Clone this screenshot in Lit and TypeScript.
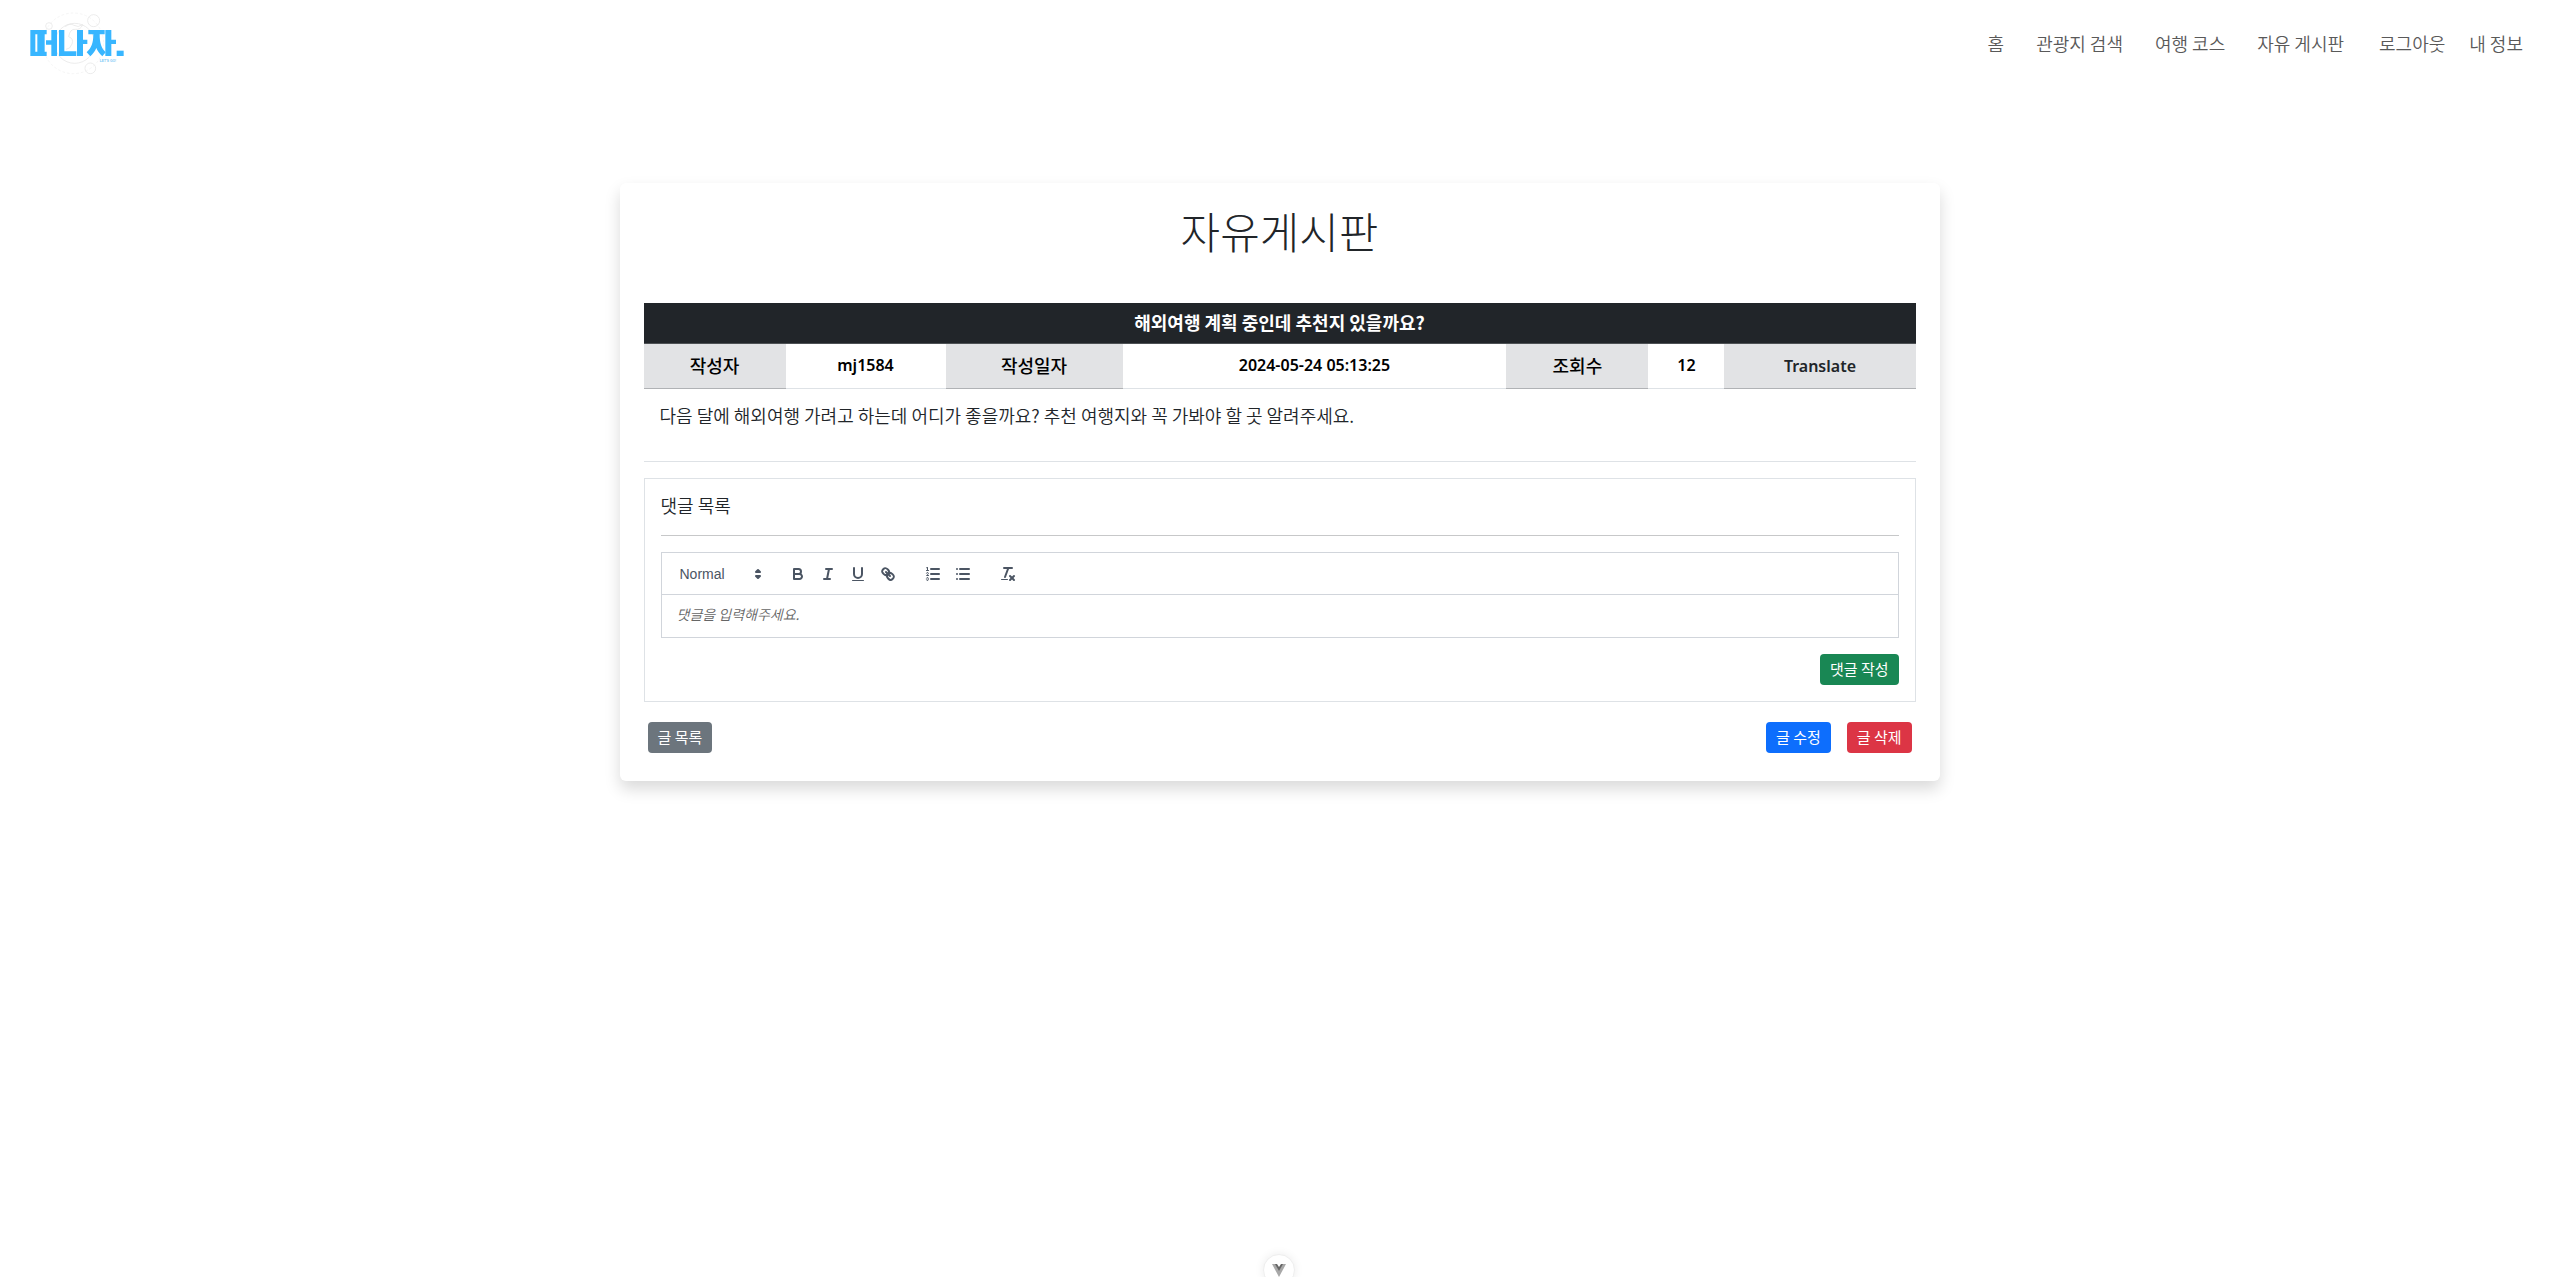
import { LitElement, html, css, svg } from "lit";
import { customElement, state } from "lit/decorators.js";

const icons = {
  bold: svg`<path class="s" d="M5,4H9.5A2.5,2.5,0,0,1,12,6.5v0A2.5,2.5,0,0,1,9.5,9H5A0,0,0,0,1,5,9V4A0,0,0,0,1,5,4Z"/><path class="s" d="M5,9h5.5A2.5,2.5,0,0,1,13,11.5v0A2.5,2.5,0,0,1,10.5,14H5a0,0,0,0,1,0,0V9A0,0,0,0,1,5,9Z"/>`,
  italic: svg`<line class="s" x1="7" x2="13" y1="4" y2="4"/><line class="s" x1="5" x2="11" y1="14" y2="14"/><line class="s" x1="8" x2="10" y1="14" y2="4"/>`,
  underline: svg`<path class="s" d="M5,3V9a4.012,4.012,0,0,0,4,4H9a4.012,4.012,0,0,0,4-4V3"/><rect class="f" height="1" rx="0.5" ry="0.5" width="12" x="3" y="15"/>`,
  link: svg`<line class="s" x1="7" x2="11" y1="7" y2="11"/><path class="s" d="M8.9,4.577a3.476,3.476,0,0,1,.36,4.679A3.476,3.476,0,0,1,4.577,8.9C3.185,7.5,2.035,6.4,4.217,4.217S7.5,3.185,8.9,4.577Z"/><path class="s" d="M13.423,9.1a3.476,3.476,0,0,0-4.679-.36,3.476,3.476,0,0,0,.36,4.679c1.392,1.392,2.5,2.542,4.679.36S14.815,10.5,13.423,9.1Z"/>`,
  ordered: svg`<line class="s" x1="7" x2="15" y1="4" y2="4"/><line class="s" x1="7" x2="15" y1="9" y2="9"/><line class="s" x1="7" x2="15" y1="14" y2="14"/><line class="s t" x1="2.5" x2="4.5" y1="5.5" y2="5.5"/><path class="f" d="M3.5,6A0.5,0.5,0,0,1,3,5.5V3.085l-0.276.138A0.5,0.5,0,0,1,2.053,3c-0.124-.247-0.023-0.324.224-0.447l1-.5A0.5,0.5,0,0,1,4,2.5v3A0.5,0.5,0,0,1,3.5,6Z"/><path class="s t" d="M4.5,10.5h-2c0-.234,1.85-1.076,1.85-2.234A0.959,0.959,0,0,0,2.5,8.156"/><path class="s t" d="M2.5,14.846a0.959,0.959,0,0,0,1.85-.109A0.7,0.7,0,0,0,3.75,14a0.688,0.688,0,0,0,.6-0.736,0.959,0.959,0,0,0-1.85-.109"/>`,
  bullet: svg`<line class="s" x1="6" x2="15" y1="4" y2="4"/><line class="s" x1="6" x2="15" y1="9" y2="9"/><line class="s" x1="6" x2="15" y1="14" y2="14"/><line class="s" x1="3" x2="3" y1="4" y2="4"/><line class="s" x1="3" x2="3" y1="9" y2="9"/><line class="s" x1="3" x2="3" y1="14" y2="14"/>`,
  clean: svg`<line class="s" x1="5" x2="13" y1="3" y2="3"/><line class="s" x1="6" x2="9.35" y1="12" y2="3"/><line class="s" x1="11" x2="15" y1="11" y2="15"/><line class="s" x1="15" x2="11" y1="11" y2="15"/><rect class="f" height="1" rx="0.5" ry="0.5" width="7" x="2" y="14"/>`,
};

type IconName = keyof typeof icons;

const toolGroups: { name: IconName; label: string }[][] = [
  [
    { name: "bold", label: "굵게" },
    { name: "italic", label: "기울임" },
    { name: "underline", label: "밑줄" },
    { name: "link", label: "링크" },
  ],
  [
    { name: "ordered", label: "번호 목록" },
    { name: "bullet", label: "글머리 목록" },
  ],
  [{ name: "clean", label: "서식 지우기" }],
];

@customElement("site-header")
export class SiteHeader extends LitElement {
  static styles = css`
    :host {
      display: block;
      font-weight: 350;
    }
    .bar {
      display: flex;
      align-items: center;
      justify-content: space-between;
      height: 86px;
      padding: 0 36px 0 28px;
    }
    .logo {
      display: block;
      width: 100px;
      height: 70px;
    }
    .logo svg {
      display: block;
      width: 100%;
      height: 100%;
    }
    .tagline {
      fill: #7cc8f5;
      font: 700 10px "Liberation Sans", sans-serif;
    }
    .menu {
      display: flex;
      align-items: center;
      gap: 32px;
    }
    .account {
      display: flex;
      gap: 24px;
      margin-left: 3px;
    }
    a {
      color: #595959;
      font-size: 18px;
      line-height: 24px;
      text-decoration: none;
    }
  `;

  render() {
    return html`
      <header class="bar">
        <a class="logo" href="#" aria-label="떠나자.">
          <svg viewBox="84 24 300 210">
            <g fill="none" stroke="#e2e2e2" stroke-width="2">
              <circle cx="220" cy="130" r="91" stroke="#f0f0f0" stroke-dasharray="8 6" />
              <circle cx="224" cy="130" r="60" />
              <path d="M196 80q14-12 26-4t26-2q-6 16-22 14t-20 22q16 6 10 22t-18 16" />
              <circle cx="281" cy="62" r="18" />
              <circle cx="147" cy="78" r="10" />
              <circle cx="271" cy="205" r="16" />
            </g>
            <g fill="#38b6ff">
              <path fill-rule="evenodd" d="M91 90H140V103H134V155H140V168H91ZM106 103V155H112V103ZM118 103V103Z" />
              <path d="M154 90H171V168H154V134H138V121H154Z" />
              <path d="M177 90H193V154H229V168H177Z" />
              <path d="M231 90H249V119H262V132H249V168H231Z" />
              <path d="M265 90H314V103H299C299 130 304 144 317 157L307 169C298 161 293 153 289 144C285 153 280 161 271 169L260 157C274 144 280 130 280 103H265Z" />
              <path d="M316 90H334V119H348V132H334V168H316Z" />
              <path d="M350 152H371V168H350Z" />
            </g>
            <text class="tagline" x="299" y="186">LET'S GO!</text>
          </svg>
        </a>
        <nav class="menu">
          <a href="#">홈</a>
          <a href="#">관광지 검색</a>
          <a href="#">여행 코스</a>
          <a href="#">자유 게시판</a>
          <span class="account">
            <a href="#">로그아웃</a>
            <a href="#">내 정보</a>
          </span>
        </nav>
      </header>
    `;
  }
}

@customElement("comment-editor")
export class CommentEditor extends LitElement {
  static styles = css`
    :host {
      display: block;
    }
    .box {
      border: 1px solid #d1d5db;
    }
    .toolbar {
      display: flex;
      align-items: center;
      gap: 17px;
      padding: 8px 9px;
      height: 25px;
      border-bottom: 1px solid #d1d5db;
    }
    .group {
      display: flex;
      gap: 2px;
    }
    .format {
      display: flex;
      align-items: center;
      width: 96px;
    }
    select {
      appearance: none;
      flex: 1;
      min-width: 0;
      padding: 0 0 0 9px;
      border: 0;
      background: none;
      color: #4b5563;
      font: 500 14px/24px "Liberation Sans", sans-serif;
    }
    svg {
      display: block;
      width: 18px;
      height: 18px;
    }
    .tool {
      padding: 3px 5px;
      border: 0;
      background: none;
      cursor: pointer;
    }
    .s {
      fill: none;
      stroke: #4b5563;
      stroke-width: 2;
      stroke-linecap: round;
      stroke-linejoin: round;
    }
    .t {
      stroke-width: 1;
    }
    .f {
      fill: #4b5563;
    }
    textarea {
      display: block;
      box-sizing: border-box;
      width: 100%;
      height: 42px;
      padding: 10px 15px;
      border: 0;
      outline: 0;
      resize: none;
      overflow: hidden;
      background: none;
      color: #212529;
      font: 350 14px/18px "Noto Sans CJK KR", sans-serif;
    }
    textarea::placeholder {
      color: #666;
      font-style: italic;
    }
  `;

  render() {
    return html`
      <div class="box">
        <div class="toolbar">
          <span class="format">
            <select aria-label="문단 형식">
              <option>Normal</option>
            </select>
            <svg viewBox="0 0 18 18">
              <polygon class="s f" points="7 11 9 13 11 11 7 11" />
              <polygon class="s f" points="7 7 9 5 11 7 7 7" />
            </svg>
          </span>
          ${toolGroups.map(
            (group) => html`<span class="group">
              ${group.map(
                (tool) => html`<button class="tool" type="button" aria-label=${tool.label}>
                  <svg viewBox="0 0 18 18">${icons[tool.name]}</svg>
                </button>`
              )}
            </span>`
          )}
        </div>
        <textarea aria-label="댓글" placeholder="댓글을 입력해주세요."></textarea>
      </div>
    `;
  }
}

@customElement("app-root")
export class AppRoot extends LitElement {
  @state() private post = {
    title: "해외여행 계획 중인데 추천지 있을까요?",
    author: "mj1584",
    date: "2024-05-24 05:13:25",
    views: 12,
    body: "다음 달에 해외여행 가려고 하는데 어디가 좋을까요? 추천 여행지와 꼭 가봐야 할 곳 알려주세요.",
  };

  static styles = css`
    :host {
      display: flex;
      flex-direction: column;
      min-height: 100vh;
      overflow: hidden;
      position: relative;
      background: #fff;
      color: #212529;
      font-family: "Noto Sans CJK KR", sans-serif;
      font-size: 18px;
      font-weight: 350;
      line-height: 24px;
    }
    .card {
      box-sizing: border-box;
      width: 100%;
      max-width: 1320px;
      margin: 97px auto 0;
      padding: 21px 24px 28px;
      border-radius: 6px;
      background: #fff;
      box-shadow: 0 8px 16px rgba(0, 0, 0, 0.15);
    }
    h1 {
      margin: 0 0 47px;
      font-size: 43px;
      line-height: 52px;
      font-weight: 300;
      text-align: center;
    }
    .post {
      width: 100%;
      border-collapse: separate;
      border-spacing: 0;
      table-layout: fixed;
      text-align: center;
    }
    .post th,
    .post td {
      box-sizing: border-box;
      height: 44px;
      padding: 8px 8px 10px;
      color: #000;
    }
    .post .title {
      height: 41px;
      padding: 7px 8px 9px;
      border-bottom: 1px solid #4d5154;
      background: #212529;
      color: #fff;
      font-weight: 700;
    }
    .post .label {
      border-bottom: 1px solid #b0b2b5;
      background: #e2e3e5;
      font-weight: 500;
    }
    .post .value {
      border-bottom: 1px solid #dee2e6;
      font: 600 16px/24px "Noto Sans", sans-serif;
    }
    .w1 { width: 142px; }
    .w2 { width: 160px; }
    .w3 { width: 177px; }
    .w5 { width: 142px; }
    .w6 { width: 76px; }
    .w7 { width: 191px; }
    .translate {
      padding: 0;
      border: 0;
      background: none;
      color: #212529;
      font: 600 16px/24px "Noto Sans", sans-serif;
      cursor: pointer;
    }
    .body {
      margin: 0;
      padding: 14px 16px 34px;
      border-bottom: 1px solid #dee2e6;
    }
    .comments {
      margin-top: 16px;
      padding: 14px 16px 16px;
      border: 1px solid #dee2e6;
    }
    h2 {
      margin: 0 0 16px;
      padding-bottom: 18px;
      border-bottom: 1px solid #c7c8c9;
      font-size: 18px;
      line-height: 24px;
      font-weight: 350;
    }
    .row {
      display: flex;
      justify-content: flex-end;
      gap: 16px;
    }
    .submit {
      margin-top: 16px;
    }
    .actions {
      margin-top: 20px;
      padding: 0 4px;
    }
    .btn {
      height: 31px;
      padding: 0 10px 2px;
      border: 0;
      border-radius: 4px;
      color: #fff;
      font: 400 15px/24px "Noto Sans CJK KR", sans-serif;
      cursor: pointer;
    }
    .green { background: #198754; }
    .gray { margin-right: auto; background: #6c757d; }
    .blue { background: #0d6efd; }
    .red { background: #dc3545; }
    .badge {
      position: absolute;
      left: 50%;
      bottom: -9px;
      display: flex;
      justify-content: center;
      box-sizing: border-box;
      width: 32px;
      height: 32px;
      margin-left: -17px;
      padding: 9px 0 0;
      border: 1px solid #eee;
      border-radius: 16px;
      background: #fff;
      box-shadow: 0 0 10px rgba(0, 0, 0, 0.08);
    }
    .badge svg {
      display: block;
      width: 14px;
      height: 13px;
    }
  `;

  render() {
    const p = this.post;
    return html`
      <site-header></site-header>
      <main class="card">
        <h1>자유게시판</h1>
        <table class="post">
          <colgroup>
            <col class="w1" /><col class="w2" /><col class="w3" /><col />
            <col class="w5" /><col class="w6" /><col class="w7" />
          </colgroup>
          <thead>
            <tr><th class="title" colspan="7">${p.title}</th></tr>
          </thead>
          <tbody>
            <tr>
              <th class="label">작성자</th>
              <td class="value">${p.author}</td>
              <th class="label">작성일자</th>
              <td class="value">${p.date}</td>
              <th class="label">조회수</th>
              <td class="value">${p.views}</td>
              <td class="label"><button class="translate" type="button">Translate</button></td>
            </tr>
          </tbody>
        </table>
        <p class="body">${p.body}</p>
        <section class="comments">
          <h2>댓글 목록</h2>
          <comment-editor></comment-editor>
          <div class="row submit">
            <button class="btn green" type="button">댓글 작성</button>
          </div>
        </section>
        <div class="row actions">
          <button class="btn gray" type="button">글 목록</button>
          <button class="btn blue" type="button">글 수정</button>
          <button class="btn red" type="button">글 삭제</button>
        </div>
      </main>
      <button class="badge" type="button" aria-label="Vue">
        <svg viewBox="0 0 14 13">
          <path d="M0 0h14L7 13z" fill="#a8a8a8" />
          <path d="M3 0h8L7 7z" fill="#666" />
          <path d="M5 0h4L7 3z" fill="#fff" />
        </svg>
      </button>
    `;
  }
}
